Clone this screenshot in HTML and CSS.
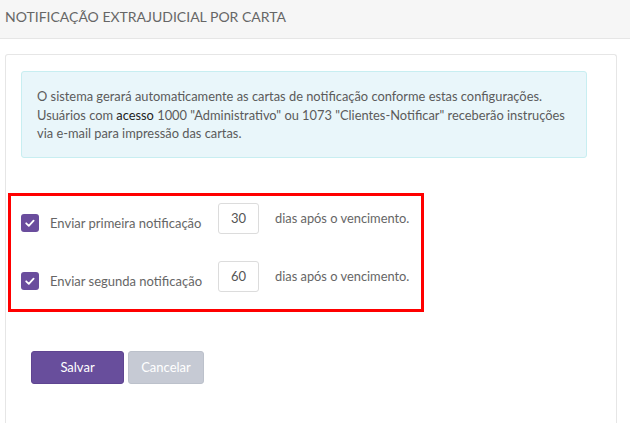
FILE: index.html
```html
<!DOCTYPE html>
<html lang="pt">
<head>
<meta charset="utf-8">
<title>Notificação extrajudicial</title>
<link rel="stylesheet" href="styles.css">
</head>
<body>
<div class="page-header">NOTIFICAÇÃO EXTRAJUDICIAL POR CARTA</div>
<div class="card">
  <p class="alert">O sistema gerará automaticamente as cartas de notificação conforme estas configurações. Usuários com <b class="strong">acesso</b> 1000 "Administrativo" ou 1073 "Clientes-Notificar" receberão instruções via e-mail para impressão das cartas.</p>
  <div class="highlight">
    <div class="form-grid">
      <span class="check"><svg viewBox="0 0 18 18" width="18" height="18"><path d="M5.2 9.3 L7.8 11.8 L12.6 6.6" fill="none" stroke="#fff" stroke-width="1.8" stroke-linecap="round" stroke-linejoin="round"/></svg></span>
      <span class="label">Enviar primeira notificação</span>
      <span class="input">30</span>
      <span class="suffix">dias após o vencimento.</span>

      <span class="check"><svg viewBox="0 0 18 18" width="18" height="18"><path d="M5.2 9.3 L7.8 11.8 L12.6 6.6" fill="none" stroke="#fff" stroke-width="1.8" stroke-linecap="round" stroke-linejoin="round"/></svg></span>
      <span class="label">Enviar segunda notificação</span>
      <span class="input">60</span>
      <span class="suffix">dias após o vencimento.</span>
    </div>
  </div>
  <div class="actions">
    <button class="btn btn-primary">Salvar</button>
    <button class="btn btn-disabled">Cancelar</button>
  </div>
</div>
</body>
</html>
```
FILE: styles.css
```css
html, body {
  margin: 0;
  padding: 0;
  background: #fff;
  font-family: Lato, "Open Sans", sans-serif;
  font-size: 13px;
  color: #666;
}
.page-header {
  height: 39px;
  box-sizing: border-box;
  padding: 8px 0 0 5px;
  background: #f6f6f6;
  border-bottom: 1px solid #e6e6e6;
  font-size: 14px;
  line-height: 17px;
  color: #666;
}
.card {
  margin: 15px 13px 0 5px;
  border: 1px solid #e6e6e6;
  border-bottom: none;
  border-radius: 3px 3px 0 0;
  padding: 16px 0 40px 0;
  min-height: 360px;
}
.alert {
  margin: 0 29px 0 15px;
  padding: 15px 14px 14px 15px;
  background: #e9f6fa;
  border: 1px solid #c8eef1;
  border-radius: 3px;
  color: #5b5b5b;
  font-size: 12.85px;
  line-height: 18.5px;
}
.strong {
  font-weight: normal;
  color: #222;
}
.highlight {
  margin: 35px 0 0 2px;
  width: 416px;
  height: 119px;
  box-sizing: border-box;
  border: 3px solid #f00;
  padding: 7px 0 0 10px;
}
.form-grid {
  display: grid;
  grid-template-columns: 18px 157px 41px auto;
  column-gap: 11px;
  row-gap: 27px;
  align-items: start;
}
.check {
  margin-top: 11px;
  width: 18px;
  height: 18px;
  background: #6a4d9d;
  border-radius: 3px;
  display: block;
}
.check svg {
  display: block;
}
.label {
  margin-top: 11px;
  line-height: 18px;
  color: #666;
}
.input {
  width: 41px;
  height: 31px;
  box-sizing: border-box;
  border: 1px solid #dcdcdc;
  border-radius: 3px;
  text-align: center;
  line-height: 29px;
  color: #555;
}
.suffix {
  margin-left: 5px;
  line-height: 31px;
  font-size: 12.85px;
  color: #666;
}
.actions {
  display: flex;
  gap: 4px;
  margin: 39px 0 0 25px;
}
.btn {
  height: 33px;
  border-radius: 3px;
  font-family: Lato, "Open Sans", sans-serif;
  font-size: 13px;
  color: #fff;
  padding: 0;
  cursor: pointer;
}
.btn-primary {
  width: 93px;
  background: #684e9c;
  border: 1px solid #5f4591;
}
.btn-disabled {
  width: 76px;
  background: #c6cad4;
  border: 1px solid #bcc1cb;
}
```
